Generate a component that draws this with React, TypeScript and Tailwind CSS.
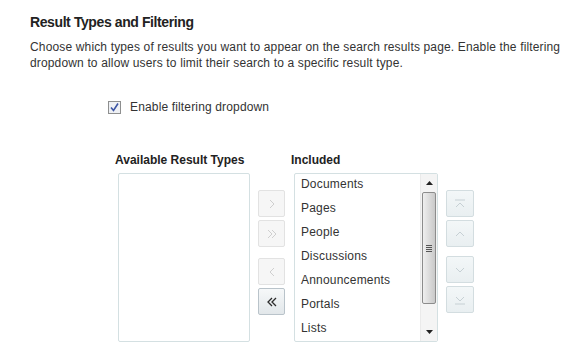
import React from "react";

const INCLUDED = ["Documents", "Pages", "People", "Discussions", "Announcements", "Portals", "Lists"];

// small glyphs for the shuttle buttons
function Glyph({ kind, color }: { kind: string; color: string }) {
  const paths: Record<string, string> = {
    right: "M6 4 L10 8 L6 12",
    rightAll: "M4 4 L8 8 L4 12 M8 4 L12 8 L8 12",
    left: "M10 4 L6 8 L10 12",
    leftAll: "M8 4 L4 8 L8 12 M12 4 L8 8 L12 12",
    top: "M3 4 L13 4 M4 11 L8 7 L12 11",
    up: "M4 10 L8 6 L12 10",
    down: "M4 6 L8 10 L12 6",
    bottom: "M3 12 L13 12 M4 5 L8 9 L12 5",
  };
  return (
    <svg width="16" height="16" viewBox="0 0 16 16" fill="none">
      <path d={paths[kind]} stroke={color} strokeWidth={kind === "leftAll" ? 1.3 : 1} />
    </svg>
  );
}

function ShuttleButton({ kind, enabled }: { kind: string; enabled?: boolean }) {
  return (
    <div
      className={`w-[27px] h-[27px] rounded-[2px] border flex items-center justify-center ${
        enabled ? "border-[#b9c3ca] bg-gradient-to-b from-[#f6f8f9] to-[#e2e7ea]" : "border-[#e2e2e2] bg-[#f6f6f6]"
      }`}
    >
      <Glyph kind={kind} color={enabled ? "#2c2c2c" : "#cfcfcf"} />
    </div>
  );
}

function OrderButton({ kind }: { kind: string }) {
  return (
    <div className="w-[28px] h-[27px] rounded-[2px] border border-[#d3dde0] bg-gradient-to-b from-[#f3f7f8] to-[#e9eff1] flex items-center justify-center">
      <Glyph kind={kind} color="#c6d0d4" />
    </div>
  );
}

function Scrollbar() {
  return (
    <div className="w-[17px] h-full bg-[#f4f4f4] border-l border-[#eaeaea] flex flex-col items-center">
      <div className="h-[18px] flex items-center justify-center">
        <svg width="7" height="4" viewBox="0 0 7 4"><path d="M0 4 L3.5 0 L7 4 Z" fill="#222" /></svg>
      </div>
      <div className="w-[14px] h-[112px] rounded-[2px] border border-[#8c8c8c] bg-gradient-to-r from-[#efefef] via-[#dcdcdc] to-[#c9c9c9] flex flex-col items-center justify-center gap-[1px]">
        <div className="w-[6px] h-[1px] bg-[#555]" />
        <div className="w-[6px] h-[1px] bg-[#555]" />
        <div className="w-[6px] h-[1px] bg-[#555]" />
        <div className="w-[6px] h-[1px] bg-[#555]" />
      </div>
      <div className="flex-1" />
      <div className="h-[18px] flex items-center justify-center">
        <svg width="7" height="4" viewBox="0 0 7 4"><path d="M0 0 L7 0 L3.5 4 Z" fill="#222" /></svg>
      </div>
    </div>
  );
}

export default function App() {
  return (
    <div className="w-[575px] h-[355px] bg-white overflow-hidden text-[#333] font-['Liberation_Sans',Arial,sans-serif]">
      <div className="pl-[30px] pt-[12px]">
        <h1 className="text-[14px] leading-[20px] font-bold tracking-[-0.4px] text-[#222]">Result Types and Filtering</h1>
        <p className="mt-[7px] text-[12px] leading-[16px] tracking-[0.15px] w-[540px]">
          Choose which types of results you want to appear on the search results page. Enable the filtering dropdown to allow users to limit their search to a specific result type.
        </p>
      </div>

      <label className="mt-[28px] ml-[108px] flex items-center gap-[9px] text-[12px] leading-[16px] tracking-[0.15px]">
        <svg width="13" height="13" viewBox="0 0 13 13">
          <rect x="0.5" y="0.5" width="12" height="12" fill="#eef0f4" stroke="#8e8f8f" />
          <path d="M3 6.5 L5.5 9.5 L10 2.5" stroke="#3b54a4" strokeWidth="1.6" fill="none" />
        </svg>
        Enable filtering dropdown
      </label>

      <div className="mt-[37px] ml-[115px] flex text-[12px] leading-[16px] font-bold text-[#222]">
        <div className="w-[176px]">Available Result Types</div>
        <div>Included</div>
      </div>

      <div className="mt-[5px] ml-[118px] flex items-start">
        <div className="w-[132px] h-[169px] border border-[#d4e0e2] rounded-[2px]" />

        <div className="ml-[8px] mt-[17px] flex flex-col">
          <ShuttleButton kind="right" />
          <div className="mt-[3px]"><ShuttleButton kind="rightAll" /></div>
          <div className="mt-[11px]"><ShuttleButton kind="left" /></div>
          <div className="mt-[3px]"><ShuttleButton kind="leftAll" enabled /></div>
        </div>

        <div className="ml-[9px] w-[144px] h-[169px] border border-[#d4e0e2] rounded-[2px] flex overflow-hidden">
          <div className="flex-1 overflow-hidden">
            <ul className="-mt-[2px] pl-[6px] text-[12px] leading-[24px] tracking-[0.2px]">
              {INCLUDED.map((item) => (
                <li key={item}>{item}</li>
              ))}
            </ul>
          </div>
          <Scrollbar />
        </div>

        <div className="ml-[8px] mt-[17px] flex flex-col">
          <OrderButton kind="top" />
          <div className="mt-[3px]"><OrderButton kind="up" /></div>
          <div className="mt-[9px]"><OrderButton kind="down" /></div>
          <div className="mt-[3px]"><OrderButton kind="bottom" /></div>
        </div>
      </div>
    </div>
  );
}
